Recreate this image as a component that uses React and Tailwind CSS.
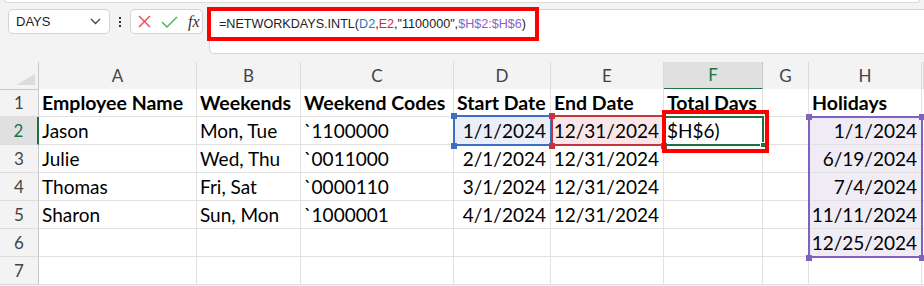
import React from "react";

const COLS = "grid-cols-[39px_158px_104px_153px_97px_113px_99px_46px_113px_1fr]";
const LETTERS = ["A", "B", "C", "D", "E", "F", "G", "H", ""];

const ROWS = [
  ["Employee Name", "Weekends", "Weekend Codes", "Start Date", "End Date", "Total Days", "", "Holidays", ""],
  ["Jason", "Mon, Tue", "`1100000", "1/1/2024", "12/31/2024", "$H$6)", "", "1/1/2024", ""],
  ["Julie", "Wed, Thu", "`0011000", "2/1/2024", "12/31/2024", "", "", "6/19/2024", ""],
  ["Thomas", "Fri, Sat", "`0000110", "3/1/2024", "12/31/2024", "", "", "7/4/2024", ""],
  ["Sharon", "Sun, Mon", "`1000001", "4/1/2024", "12/31/2024", "", "", "11/11/2024", ""],
  ["", "", "", "", "", "", "", "12/25/2024", ""],
  ["", "", "", "", "", "", "", "", ""],
];

function cellBg(r, c) {
  if (r === 1 && c === 3) return "bg-[#e9eef8]";
  if (r === 1 && c === 4) return "bg-[#f9e6e8]";
  if (r >= 1 && r <= 5 && c === 7) return "bg-[#efecf6]";
  return "bg-white";
}

function Sq({ cls }) {
  return <div className={"absolute w-[6px] h-[6px] " + cls} />;
}

export default function App() {
  return (
    <div className="relative w-[924px] h-[286px] overflow-hidden bg-[#f3f3f3] font-['Lato',sans-serif] text-black">
      {/* ribbon edge */}
      <div className="h-[3px] mx-[4px] bg-white border-b border-x border-[#dadada] rounded-b-[5px]" />

      {/* formula row */}
      <div className="flex items-start pt-[6px] pl-[8px] h-[59px]">
        <div className="w-[102px] h-[25px] bg-white border border-[#d4d4d4] rounded-[5px] flex items-center justify-between pl-[7px] pr-[8px]">
          <span className="font-['Liberation_Sans',sans-serif] text-[13px] text-[#222]">DAYS</span>
          <svg width="11" height="7" viewBox="0 0 11 7">
            <path d="M1 1 L5.5 5.5 L10 1" fill="none" stroke="#444" strokeWidth="1.3" />
          </svg>
        </div>
        <div className="w-[20px] h-[25px] flex flex-col items-center justify-center gap-[2px]">
          <div className="w-[2px] h-[2px] bg-[#333]" />
          <div className="w-[2px] h-[2px] bg-[#333]" />
          <div className="w-[2px] h-[2px] bg-[#333]" />
        </div>
        <div className="w-[73px] h-[25px] bg-white border border-[#d4d4d4] rounded-[5px] flex items-center pl-[7px] gap-[10px]">
          <svg width="13" height="13" viewBox="0 0 13 13">
            <path d="M1 1 L12 12 M12 1 L1 12" stroke="#e5484d" strokeWidth="1.4" fill="none" />
          </svg>
          <svg width="17" height="12" viewBox="0 0 17 12">
            <path d="M1 6 L6 11 L16 1" stroke="#4caf50" strokeWidth="1.4" fill="none" />
          </svg>
          <span className="font-['Liberation_Serif',serif] italic text-[16px] text-[#333] leading-none">fx</span>
        </div>
        <div className="ml-[6px] flex-1 h-[45px] bg-white border border-[#d4d4d4] rounded-l-[5px] border-r-0 pl-[9px] pt-[5px]">
          <div className="font-['Liberation_Sans',sans-serif] text-[12.6px] leading-[19px] text-[#222] whitespace-nowrap">
            =NETWORKDAYS.INTL(<span className="text-[#2e74c6]">D2</span>,<span className="text-[#c8323c]">E2</span>,"1100000",<span className="text-[#8a63c7]">$H$2:$H$6</span>)
          </div>
        </div>
      </div>

      {/* sheet */}
      <div className="flex flex-col">
        {/* column headers */}
        <div className={"grid h-[27px] " + COLS}>
          <div className="relative bg-[#f3f3f3] border-r border-b border-[#c8c8c8]">
            <svg className="absolute right-[3px] bottom-[4px]" width="19" height="11" viewBox="0 0 19 11">
              <path d="M19 0 L19 11 L0 11 Z" fill="#dcdcdc" />
            </svg>
          </div>
          {LETTERS.map((l, i) =>
            l === "F" ? (
              <div key={i} className="bg-[#e0e0e0] border-r border-[#c8c8c8] border-b-2 border-b-[#1e7145] flex items-center justify-center text-[17px] text-[#1e7145]">
                {l}
              </div>
            ) : (
              <div key={i} className="bg-[#f3f3f3] border-r border-[#dcdcdc] border-b border-b-[#c8c8c8] flex items-center justify-center text-[17px] text-[#444]">
                {l}
              </div>
            )
          )}
        </div>

        {ROWS.map((row, r) => (
          <div key={r} className={"grid h-[28px] " + COLS}>
            {r === 1 ? (
              <div className="bg-[#e0e0e0] border-r-2 border-r-[#1e7145] border-b border-b-[#dcdcdc] flex items-center justify-center text-[17px] text-[#1e7145]">
                {r + 1}
              </div>
            ) : (
              <div className="bg-[#f3f3f3] border-r border-r-[#c8c8c8] border-b border-b-[#dcdcdc] flex items-center justify-center text-[17px] text-[#444]">
                {r + 1}
              </div>
            )}
            {row.map((v, c) => {
              const right = r >= 1 && (c === 3 || c === 4 || c === 7);
              return (
                <div
                  key={c}
                  className={
                    "border-r border-b border-[#e1e1e1] flex items-center overflow-visible whitespace-nowrap leading-none " +
                    cellBg(r, c) +
                    (r === 0 ? " font-bold text-[19.5px]" : " text-[19px]") +
                    (right ? " justify-end pr-[4px]" : " pl-[3px]")
                  }
                >
                  {v}
                </div>
              );
            })}
          </div>
        ))}
      </div>

      {/* D2 reference */}
      <div className="absolute left-[453px] top-[115px] w-[99px] h-[31px] border-2 border-[#3c6fc4]" />
      <Sq cls="left-[451px] top-[113px] bg-[#3c6fc4]" />
      <Sq cls="left-[451px] top-[143px] bg-[#3c6fc4]" />
      {/* E2 reference */}
      <div className="absolute left-[551px] top-[115px] w-[113px] h-[31px] border-2 border-[#c4363f]" />
      <Sq cls="left-[549px] top-[113px] bg-[#c4363f]" />
      <Sq cls="left-[549px] top-[143px] bg-[#c4363f]" />
      <Sq cls="left-[661px] top-[143px] bg-[#c4363f]" />
      {/* F2 active */}
      <div className="absolute left-[664px] top-[116px] w-[100px] h-[30px] border-2 border-[#1e7145]" />
      <div className="absolute left-[760px] top-[142px] w-[6px] h-[6px] bg-[#1e7145] border border-white" />
      {/* H range */}
      <div className="absolute left-[808px] top-[116px] w-[115px] h-[142px] border-2 border-[#8060c0]" />
      <Sq cls="left-[806px] top-[114px] bg-[#8060c0]" />
      <Sq cls="left-[919px] top-[114px] bg-[#8060c0]" />
      <Sq cls="left-[806px] top-[255px] bg-[#8060c0]" />
      <Sq cls="left-[919px] top-[255px] bg-[#8060c0]" />

      {/* red highlight boxes */}
      <div className="absolute left-[207px] top-[7px] w-[332px] h-[34px] border-4 border-[#ff0000]" />
      <div className="absolute left-[662px] top-[110px] w-[107px] h-[43px] border-4 border-[#ff0000]" />
    </div>
  );
}
